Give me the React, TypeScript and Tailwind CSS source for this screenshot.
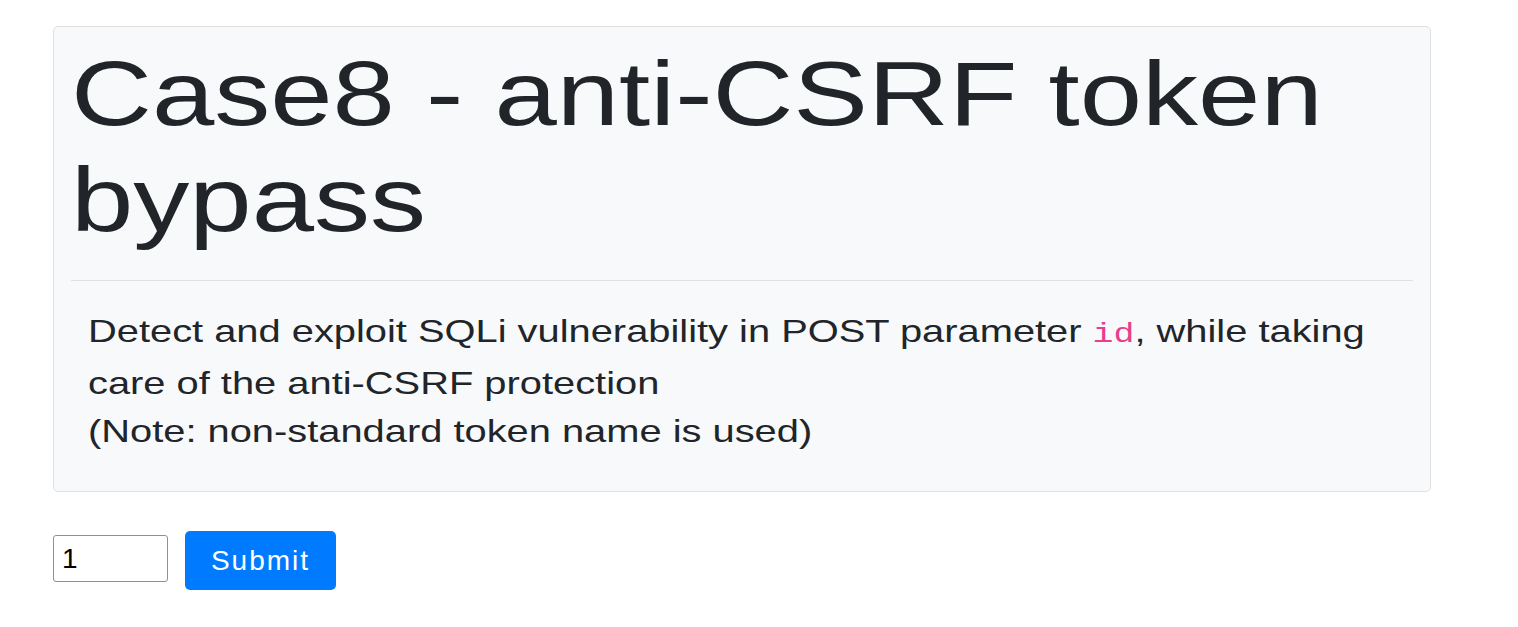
export default function App() {
  return (
    <div className="min-h-screen bg-white font-['Liberation_Sans',Arial,sans-serif] text-[#212529]">
      <div className="pl-[53px] pt-[26px] w-[1431px]">
        {/* Case description */}
        <div className="rounded-[5px] border border-[#dfe0e1] bg-[#f8f9fa] px-[17px] pt-[15px] pb-[36px]">
          <h1 className="w-[1078px] origin-left scale-x-[1.245] text-[90px] leading-[105.6px] font-normal">
            Case8 - anti-CSRF token bypass
          </h1>
          <hr className="mt-[27px] mb-[26px] border-t border-[#dfe0e1]" />
          <p className="ml-[17px] w-[1064px] origin-left scale-x-[1.245] text-[32px] leading-[48px]">
            Detect and exploit SQLi vulnerability in POST parameter{' '}
            <code className="font-['Liberation_Mono',monospace] text-[28px] text-[#e83e8c]">id</code>, while taking
            care of the anti-CSRF protection
            <br />
            (Note: non-standard token name is used)
          </p>
        </div>

        {/* Form */}
        <form className="mt-[39px] flex items-start gap-[17px]" onSubmit={(e) => e.preventDefault()}>
          <input
            type="text"
            defaultValue="1"
            className="mt-[4px] h-[47px] w-[115px] rounded-[3px] border border-[#8f8f9d] bg-white px-[8px] text-[28px] text-black"
          />
          <button
            type="submit"
            className="h-[59px] w-[151px] rounded-[5px] bg-[#007bff] text-[28px] tracking-[2px] text-white"
          >
            Submit
          </button>
        </form>
      </div>
    </div>
  )
}
